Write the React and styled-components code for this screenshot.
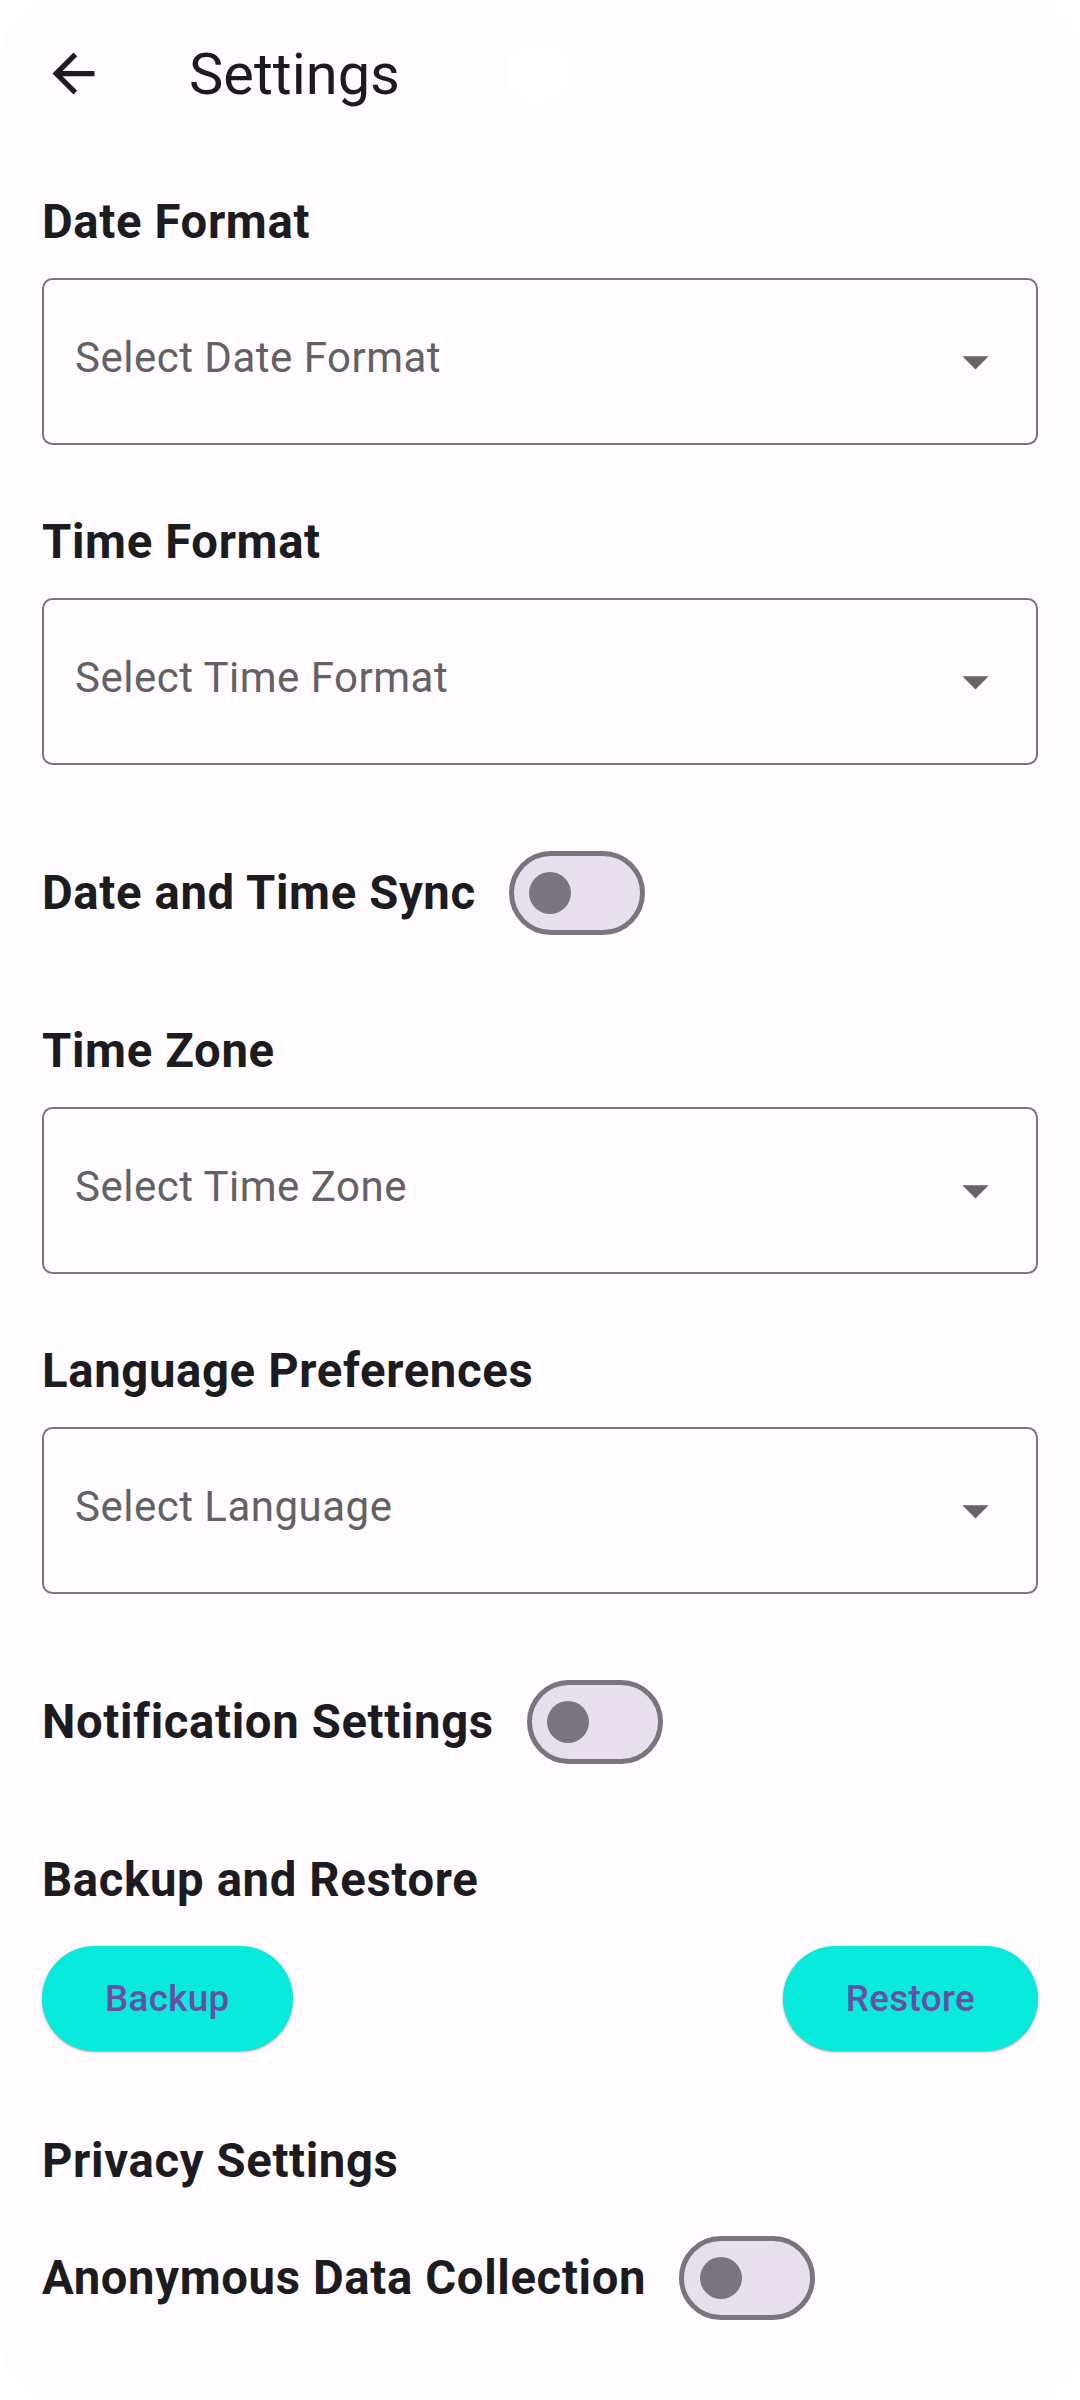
import React, { useState } from 'react';
import styled, { createGlobalStyle } from 'styled-components';

const GlobalStyle = createGlobalStyle`
  body {
    margin: 0;
    background: #ffffff;
    font-family: Roboto, "Noto Sans", sans-serif;
    -webkit-font-smoothing: antialiased;
  }
`;

const Screen = styled.div`
  position: relative;
  width: 1080px;
  min-height: 2400px;
  background: #fffbfe;
  border-radius: 60px;
  overflow: hidden;
  color: #1c1b1f;
`;

const AppBar = styled.header`
  display: flex;
  align-items: center;
  height: 147px;
`;

const BackButton = styled.button`
  display: flex;
  align-items: center;
  justify-content: center;
  width: 147px;
  height: 147px;
  padding: 0;
  border: none;
  background: transparent;
  color: #1c1b1f;
  cursor: pointer;
`;

const Title = styled.h1`
  margin: 0 0 0 42px;
  font-size: 57.75px;
  font-weight: 400;
  line-height: 68px;
`;

const Punch = styled.div`
  position: absolute;
  left: 507px;
  top: 39px;
  width: 66px;
  height: 66px;
  border-radius: 50%;
  background: #ffffff;
`;

const Body = styled.main`
  display: flex;
  flex-direction: column;
  padding: 48px 42px 0;
`;

const Heading = styled.h2`
  margin: ${(p) => p.$mt || 0}px 0 0;
  font-size: 47.25px;
  font-weight: 700;
  line-height: 55px;
  letter-spacing: 0.65px;
  color: #1c1b1f;
`;

const Dropdown = styled.div`
  display: flex;
  align-items: center;
  justify-content: space-between;
  box-sizing: border-box;
  height: 167px;
  margin-top: 28px;
  padding: 0 29px 0 31px;
  border: 2px solid #79747e;
  border-radius: 10.5px;
  cursor: pointer;
`;

const Placeholder = styled.span`
  margin-bottom: 8px;
  font-size: 42px;
  font-weight: 400;
  letter-spacing: 0.5px;
  color: #636163;
`;

const ToggleRow = styled.div`
  display: flex;
  align-items: center;
  gap: 33px;
  margin-top: ${(p) => p.$mt || 0}px;
`;

const RowLabel = styled.span`
  font-size: 47.25px;
  font-weight: 700;
  line-height: 55px;
  letter-spacing: 0.65px;
  color: #1c1b1f;
`;

const Track = styled.div`
  display: flex;
  align-items: center;
  box-sizing: border-box;
  width: 136px;
  height: 84px;
  padding-left: ${(p) => (p.$on ? 52 : 15.5)}px;
  border: 5px solid ${(p) => (p.$on ? '#6750a4' : '#79747e')};
  border-radius: 42px;
  background: ${(p) => (p.$on ? '#6750a4' : '#e7e0ec')};
  cursor: pointer;
`;

const Thumb = styled.div`
  width: ${(p) => (p.$on ? 63 : 42)}px;
  height: ${(p) => (p.$on ? 63 : 42)}px;
  border-radius: 50%;
  background: ${(p) => (p.$on ? '#ffffff' : '#79747e')};
`;

const ButtonRow = styled.div`
  display: flex;
  justify-content: space-between;
  margin-top: 38px;
`;

const PillButton = styled.button`
  height: 105px;
  padding: 0 63px;
  border: none;
  border-radius: 53px;
  background: #08eadb;
  color: #6750a4;
  font-family: Roboto, sans-serif;
  font-size: 36.75px;
  font-weight: 500;
  letter-spacing: 0.35px;
  box-shadow: 0 1px 3px rgba(0, 0, 0, 0.28), 0 1px 1px rgba(0, 0, 0, 0.12);
  cursor: pointer;
`;

const BackArrow = () => (
  <svg width="63" height="63" viewBox="0 0 24 24" fill="currentColor">
    <path d="M20 11H7.83l5.59-5.59L12 4l-8 8 8 8 1.41-1.41L7.83 13H20v-2z" />
  </svg>
);

const DropArrow = () => (
  <svg width="63" height="63" viewBox="0 0 24 24" fill="#666466">
    <path d="M7 10l5 5 5-5z" />
  </svg>
);

const Select = ({ label }) => (
  <Dropdown>
    <Placeholder>{label}</Placeholder>
    <DropArrow />
  </Dropdown>
);

const Switch = ({ on, onToggle }) => (
  <Track $on={on} onClick={onToggle}>
    <Thumb $on={on} />
  </Track>
);

const App = () => {
  const [sync, setSync] = useState(false);
  const [notify, setNotify] = useState(false);
  const [anon, setAnon] = useState(false);

  return (
    <Screen>
      <GlobalStyle />
      <AppBar>
        <BackButton aria-label="Back">
          <BackArrow />
        </BackButton>
        <Title>Settings</Title>
      </AppBar>
      <Punch />
      <Body>
        <Heading>Date Format</Heading>
        <Select label="Select Date Format" />

        <Heading $mt={70}>Time Format</Heading>
        <Select label="Select Time Format" />

        <ToggleRow $mt={86}>
          <RowLabel>Date and Time Sync</RowLabel>
          <Switch on={sync} onToggle={() => setSync(!sync)} />
        </ToggleRow>

        <Heading $mt={89}>Time Zone</Heading>
        <Select label="Select Time Zone" />

        <Heading $mt={70}>Language Preferences</Heading>
        <Select label="Select Language" />

        <ToggleRow $mt={86}>
          <RowLabel>Notification Settings</RowLabel>
          <Switch on={notify} onToggle={() => setNotify(!notify)} />
        </ToggleRow>

        <Heading $mt={89}>Backup and Restore</Heading>
        <ButtonRow>
          <PillButton>Backup</PillButton>
          <PillButton>Restore</PillButton>
        </ButtonRow>

        <Heading $mt={83}>Privacy Settings</Heading>
        <ToggleRow $mt={47}>
          <RowLabel>Anonymous Data Collection</RowLabel>
          <Switch on={anon} onToggle={() => setAnon(!anon)} />
        </ToggleRow>
      </Body>
    </Screen>
  );
};

export default App;
